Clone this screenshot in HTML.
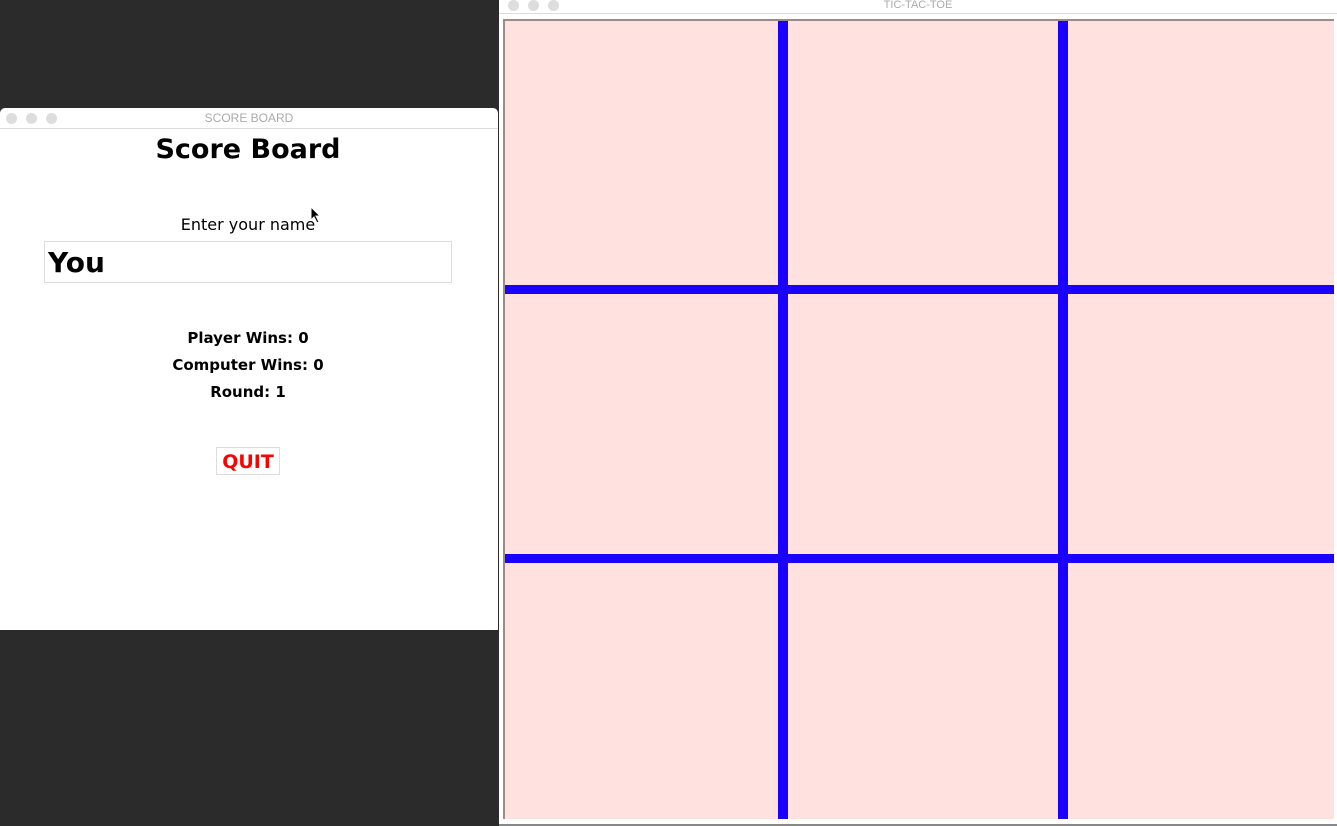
<!DOCTYPE html>
<html><head><meta charset="utf-8"><style>
*{margin:0;padding:0;box-sizing:border-box}
body{width:1337px;height:826px;background:#2b2b2b;position:relative;overflow:hidden;font-family:"DejaVu Sans","Liberation Sans",sans-serif}
.win{position:absolute;background:#fff}
.tb{position:absolute;left:0;right:0;top:0;height:21px;border-bottom:1px solid #ddd;font-family:"Liberation Sans",sans-serif;font-size:12px;color:#aaa;text-align:center;line-height:21px}
.dot{position:absolute;top:5px;width:11px;height:11px;border-radius:50%;background:#ddd}
.c{position:absolute;left:0;width:496px;text-align:center;color:#000}
</style></head><body>
<div class="win" style="left:0;top:108px;width:498px;height:522px;border-radius:5px 5px 0 0">
  <div class="tb">SCORE BOARD<span class="dot" style="left:6px"></span><span class="dot" style="left:26px"></span><span class="dot" style="left:46px"></span></div>
  <div class="c" style="top:26px;font-size:27px;font-weight:bold">Score Board</div>
  <div class="c" style="top:107px;font-size:16px">Enter your name</div>
  <div style="position:absolute;left:44px;top:133px;width:408px;height:42px;border:1px solid #ddd;font-size:28px;font-weight:bold;padding-left:3px;line-height:42px">You</div>
  <div class="c" style="top:221px;font-size:15px;font-weight:bold">Player Wins: 0</div>
  <div class="c" style="top:248px;font-size:15px;font-weight:bold">Computer Wins: 0</div>
  <div class="c" style="top:275px;font-size:15px;font-weight:bold">Round: 1</div>
  <div style="position:absolute;left:216px;top:339px;width:64px;height:28px;border:1px solid #ddd;color:#f00;font-size:19px;font-weight:bold;text-align:center;line-height:28px">QUIT</div>
  <svg style="position:absolute;left:310px;top:98px" width="12" height="18" viewBox="0 0 12 18"><path d="M1 1 L1 14 L4 11 L7 17 L9 16 L6 10 L10 10 Z" fill="#000" stroke="#fff" stroke-width="1"/></svg>
</div>
<div class="win" style="left:499px;top:0;width:838px;height:826px">
  <div class="tb" style="height:14px;line-height:10px;font-size:11px">TIC-TAC-TOE<span class="dot" style="left:9px;top:0"></span><span class="dot" style="left:29px;top:0"></span><span class="dot" style="left:49px;top:0"></span></div>
  <div style="position:absolute;left:0;right:0;bottom:0;height:2px;background:#888"></div>
  <div style="position:absolute;left:4px;top:19px;width:831px;height:800px;background:#ffe2df;border-top:2px solid #9a8a88;border-left:2px solid #9a8a88;overflow:hidden">
    <div style="position:absolute;left:273px;top:0;width:10px;height:100%;background:#1a00ff"></div>
    <div style="position:absolute;left:553px;top:0;width:10px;height:100%;background:#1a00ff"></div>
    <div style="position:absolute;left:0;top:264px;width:100%;height:9px;background:#1a00ff"></div>
    <div style="position:absolute;left:0;top:533px;width:100%;height:9px;background:#1a00ff"></div>
  </div>
</div>
</body></html>
